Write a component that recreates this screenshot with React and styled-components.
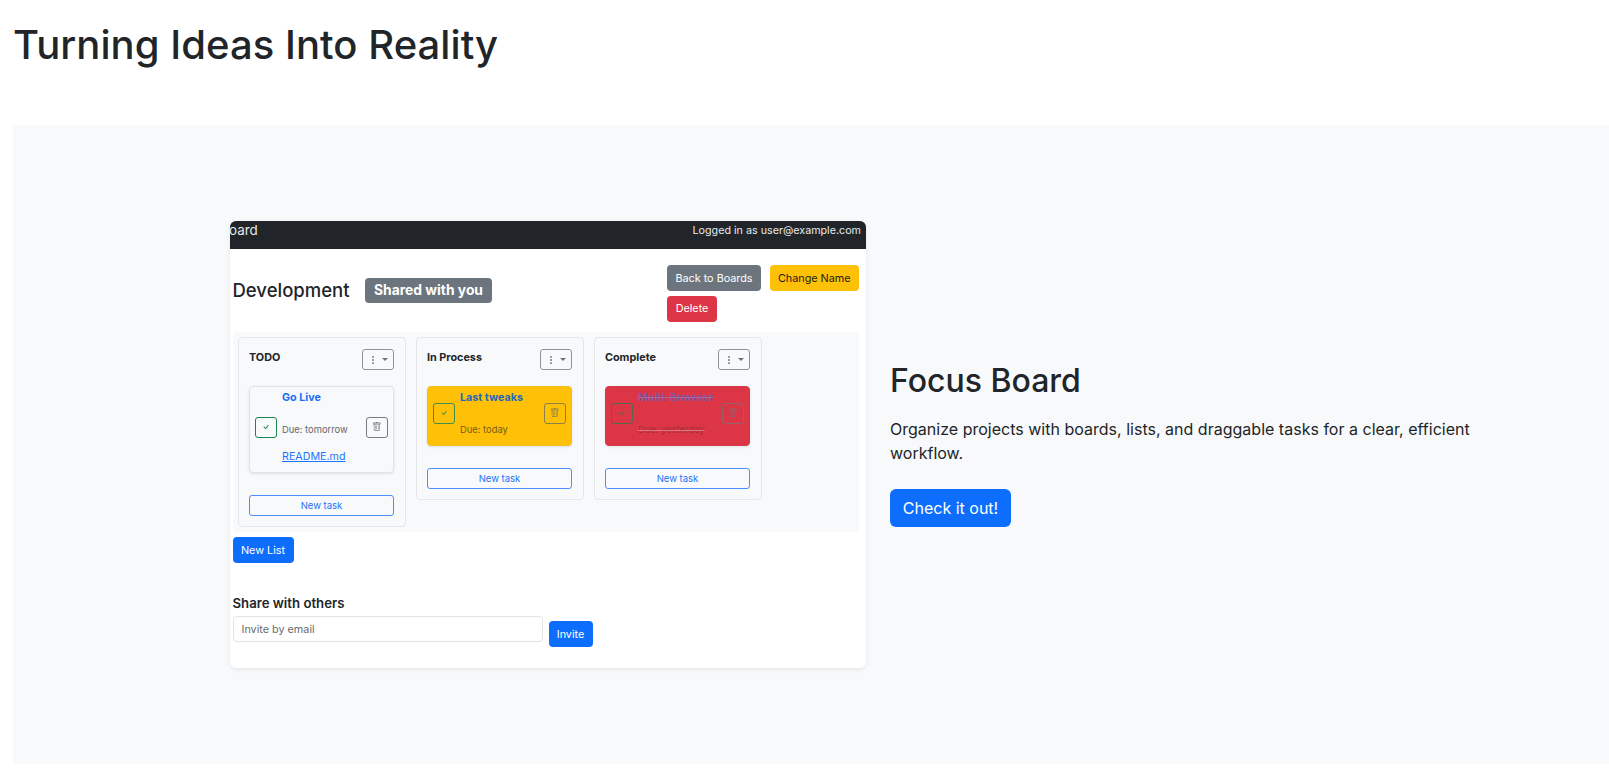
import React from "react";
import styled, { createGlobalStyle, css } from "styled-components";
import { BsCheck, BsThreeDotsVertical, BsTrash } from "react-icons/bs";

const Global = createGlobalStyle`
  *, *::before, *::after { box-sizing: border-box; }
  html, body { margin: 0; height: 100%; overflow: hidden; background: #fff; }
  body { font-family: Inter, "Liberation Sans", sans-serif; font-size: 16px; line-height: 1.5; color: #212529; }
  h1, h2, h3, h4, p { margin: 0; }
  button, input { font-family: inherit; margin: 0; }
`;

const Page = styled.main`
  padding: 21px 0 0 13px;
`;

const PageTitle = styled.h1`
  font-size: 40px;
  font-weight: 500;
  line-height: 48px;
  letter-spacing: 0.05px;
  white-space: nowrap;
`;

const Showcase = styled.section`
  display: flex;
  align-items: center;
  gap: 24px;
  height: 639px;
  margin-top: 56px;
  padding: 0 122px 0 217px;
  background: #f8f9fa;
`;

const Preview = styled.div`
  flex: none;
  width: 636px;
  height: 447px;
  overflow: hidden;
  background: #fff;
  border-radius: 6px;
  box-shadow: 0 2px 4px rgba(0, 0, 0, 0.075);
  font-size: 10.8px;
  line-height: 16px;
  white-space: nowrap;
`;

const NavBar = styled.header`
  display: flex;
  justify-content: space-between;
  height: 28px;
  padding: 2px 5px 0 0;
  background: #212529;
  color: #e9eaeb;
`;

const Brand = styled.span`
  margin-left: -1px;
  font-size: 13.4px;
  line-height: 14px;
`;

const Account = styled.span`
  font-size: 10.72px;
`;

const BoardHeader = styled.div`
  display: flex;
  height: 83px;
  padding: 16px 6px 0 2.5px;
`;

const BoardName = styled.h3`
  width: 132.5px;
  margin-top: 13px;
  font-size: 18.5px;
  font-weight: 500;
  line-height: 24px;
`;

const Badge = styled.span`
  height: 25px;
  margin-top: 13px;
  padding: 0 9px;
  border-radius: 4px;
  background: #6c757d;
  color: #fff;
  font-size: 13.85px;
  font-weight: 700;
  line-height: 24px;
`;

const Actions = styled.div`
  display: flex;
  flex-wrap: wrap;
  align-content: flex-start;
  gap: 4.5px 8.5px;
  width: 193px;
  margin-left: auto;
`;

const tones = {
  primary: css`background: #0d6efd; color: #fff;`,
  secondary: css`background: #6c757d; color: #fff;`,
  warning: css`background: #ffc107; color: #1d1b14;`,
  danger: css`background: #dc3545; color: #fff;`,
};

const Button = styled.button`
  flex: none;
  width: ${(p) => p.$width}px;
  height: 26px;
  padding: 0;
  border: 0;
  border-radius: 4px;
  font-size: 10.8px;
  line-height: 25px;
  ${(p) => tones[p.$tone]}
`;

const Lists = styled.div`
  display: flex;
  align-items: flex-start;
  gap: 10px;
  height: 200px;
  margin: 0 7px 0 3px;
  padding: 5px 5px 0 5px;
  border-radius: 4px;
  background: #f8f9fa;
`;

const List = styled.article`
  width: 168px;
  padding: 11px 11px 10px 10px;
  border: 1px solid #e4e6e8;
  border-radius: 4px;
`;

const ListHead = styled.div`
  display: flex;
  justify-content: space-between;
  height: 37px;
`;

const ListName = styled.h4`
  padding-top: 1px;
  font-size: 10.8px;
  font-weight: 700;
  line-height: 16px;
`;

const MenuButton = styled.button`
  display: flex;
  align-items: center;
  justify-content: space-between;
  width: 32px;
  height: 21px;
  padding: 0 5px;
  border: 1px solid #8d949a;
  border-radius: 3px;
  background: transparent;
  color: #6c757d;
`;

const Caret = styled.i`
  margin-top: -1px;
  border: 3px solid transparent;
  border-top-color: currentColor;
  border-bottom: 0;
`;

const cardTones = {
  plain: css`background: #f8f9fa; border-color: #e1e3e6;`,
  today: css`background: #ffc107; border-color: #f3bd1d;`,
  done: css`background: #dc3545; border-color: #d23b4a;`,
};

const TaskCard = styled.div`
  display: flex;
  align-items: center;
  height: ${(p) => p.$height}px;
  padding: 0 5px;
  border: 1px solid;
  border-radius: 4px;
  box-shadow: 0 1px 3px rgba(0, 0, 0, 0.1);
  ${(p) => cardTones[p.$tone]}
`;

const iconTones = {
  check: { plain: "#198754", today: "#3d8f4a", done: "#55684c" },
  trash: { plain: "#757d84", today: "#8b7f4c", done: "#95606a" },
};

const IconButton = styled.button`
  display: flex;
  flex: none;
  align-items: center;
  justify-content: center;
  width: 22px;
  height: 21px;
  margin-bottom: 5px;
  padding: 0 0 1px;
  border: 1px solid;
  border-radius: 3px;
  background: transparent;
  color: ${(p) => iconTones[p.$kind][p.$tone]};
`;

const TaskBody = styled.div`
  flex: 1;
  align-self: stretch;
  padding: 3px 0 0 5px;
`;

const struck = css`
  text-decoration: line-through;
  text-decoration-color: ${(p) => p.$line};
`;

const TaskName = styled.div`
  height: 32px;
  color: ${(p) => ({ plain: "#176ef5", today: "#2469bf", done: "#8455a0" })[p.$tone]};
  font-size: 10.75px;
  font-weight: 700;
  ${(p) => p.$tone === "done" && struck}
`;

const Due = styled.div`
  height: 27px;
  color: ${(p) => ({ plain: "#63686c", today: "#775c17", done: "#a52d3a" })[p.$tone]};
  font-size: 9.4px;
  ${(p) => p.$tone === "done" && struck}
`;

const Attachment = styled.a`
  color: #1b74fa;
  font-size: 10.7px;
  text-decoration: underline;
`;

const NewTask = styled.button`
  display: block;
  width: 100%;
  height: 21px;
  margin-top: 22px;
  padding: 0;
  border: 1px solid #4a91fd;
  border-radius: 3px;
  background: transparent;
  color: #1b74fa;
  font-size: 9.5px;
  line-height: 18px;
`;

const Footer = styled.div`
  padding: 5px 3px 0 2.5px;
`;

const ShareTitle = styled.h4`
  margin-top: 31px;
  font-size: 13.2px;
  font-weight: 560;
  line-height: 18px;
  height: 22px;
`;

const InviteRow = styled.form`
  display: flex;
  gap: 5.5px;
`;

const EmailInput = styled.input`
  width: 310.5px;
  height: 26px;
  padding: 0 8px;
  border: 1px solid #e1e4e7;
  border-radius: 4px;
  font-size: 10.8px;
  &::placeholder { color: #676b70; opacity: 1; }
`;

const InviteSlot = styled.div`
  padding-top: 5px;
`;

const Summary = styled.div`
  flex: 1;
`;

const ProjectName = styled.h2`
  margin-bottom: 18px;
  font-size: 32px;
  font-weight: 500;
  line-height: 36px;
`;

const Description = styled.p`
  margin-bottom: 24px;
  letter-spacing: 0.01px;
`;

const CallToAction = styled.button`
  display: block;
  width: 121px;
  height: 38px;
  padding: 0;
  border: 0;
  border-radius: 6px;
  background: #0d6efd;
  color: #fff;
  font-size: 16px;
  line-height: 38px;
`;

const lists = [
  { name: "TODO", tone: "plain", task: "Go Live", due: "Due: tomorrow", file: "README.md" },
  { name: "In Process", tone: "today", task: "Last tweaks", due: "Due: today" },
  { name: "Complete", tone: "done", task: "Multi-Browser", due: "Due: yesterday" },
];

function TaskList({ name, tone, task, due, file }) {
  return (
    <List>
      <ListHead>
        <ListName>{name}</ListName>
        <MenuButton aria-label="List menu">
          <BsThreeDotsVertical size={10} />
          <Caret />
        </MenuButton>
      </ListHead>
      <TaskCard $tone={tone} $height={file ? 87 : 60}>
        <IconButton $kind="check" $tone={tone} aria-label="Done"><BsCheck size={10} /></IconButton>
        <TaskBody>
          <TaskName $tone={tone} $line="#a9689c">{task}</TaskName>
          <Due $tone={tone} $line="#df7580">{due}</Due>
          {file && <Attachment>{file}</Attachment>}
        </TaskBody>
        <IconButton $kind="trash" $tone={tone} aria-label="Remove"><BsTrash size={9.5} /></IconButton>
      </TaskCard>
      <NewTask>New task</NewTask>
    </List>
  );
}

export default function App() {
  return (
    <>
      <Global />
      <Page>
        <PageTitle>Turning Ideas Into Reality</PageTitle>
        <Showcase>
          <Preview>
            <NavBar>
              <Brand>oard</Brand>
              <Account>Logged in as user@example.com</Account>
            </NavBar>
            <BoardHeader>
              <BoardName>Development</BoardName>
              <Badge>Shared with you</Badge>
              <Actions>
                <Button $tone="secondary" $width={94}>Back to Boards</Button>
                <Button $tone="warning" $width={89.5}>Change Name</Button>
                <Button $tone="danger" $width={50}>Delete</Button>
              </Actions>
            </BoardHeader>
            <Lists>
              {lists.map((list) => <TaskList key={list.name} {...list} />)}
            </Lists>
            <Footer>
              <Button $tone="primary" $width={61}>New List</Button>
              <ShareTitle>Share with others</ShareTitle>
              <InviteRow>
                <EmailInput placeholder="Invite by email" />
                <InviteSlot>
                  <Button type="button" $tone="primary" $width={44}>Invite</Button>
                </InviteSlot>
              </InviteRow>
            </Footer>
          </Preview>
          <Summary>
            <ProjectName>Focus Board</ProjectName>
            <Description>
              Organize projects with boards, lists, and draggable tasks for a clear, efficient workflow.
            </Description>
            <CallToAction>Check it out!</CallToAction>
          </Summary>
        </Showcase>
      </Page>
    </>
  );
}
